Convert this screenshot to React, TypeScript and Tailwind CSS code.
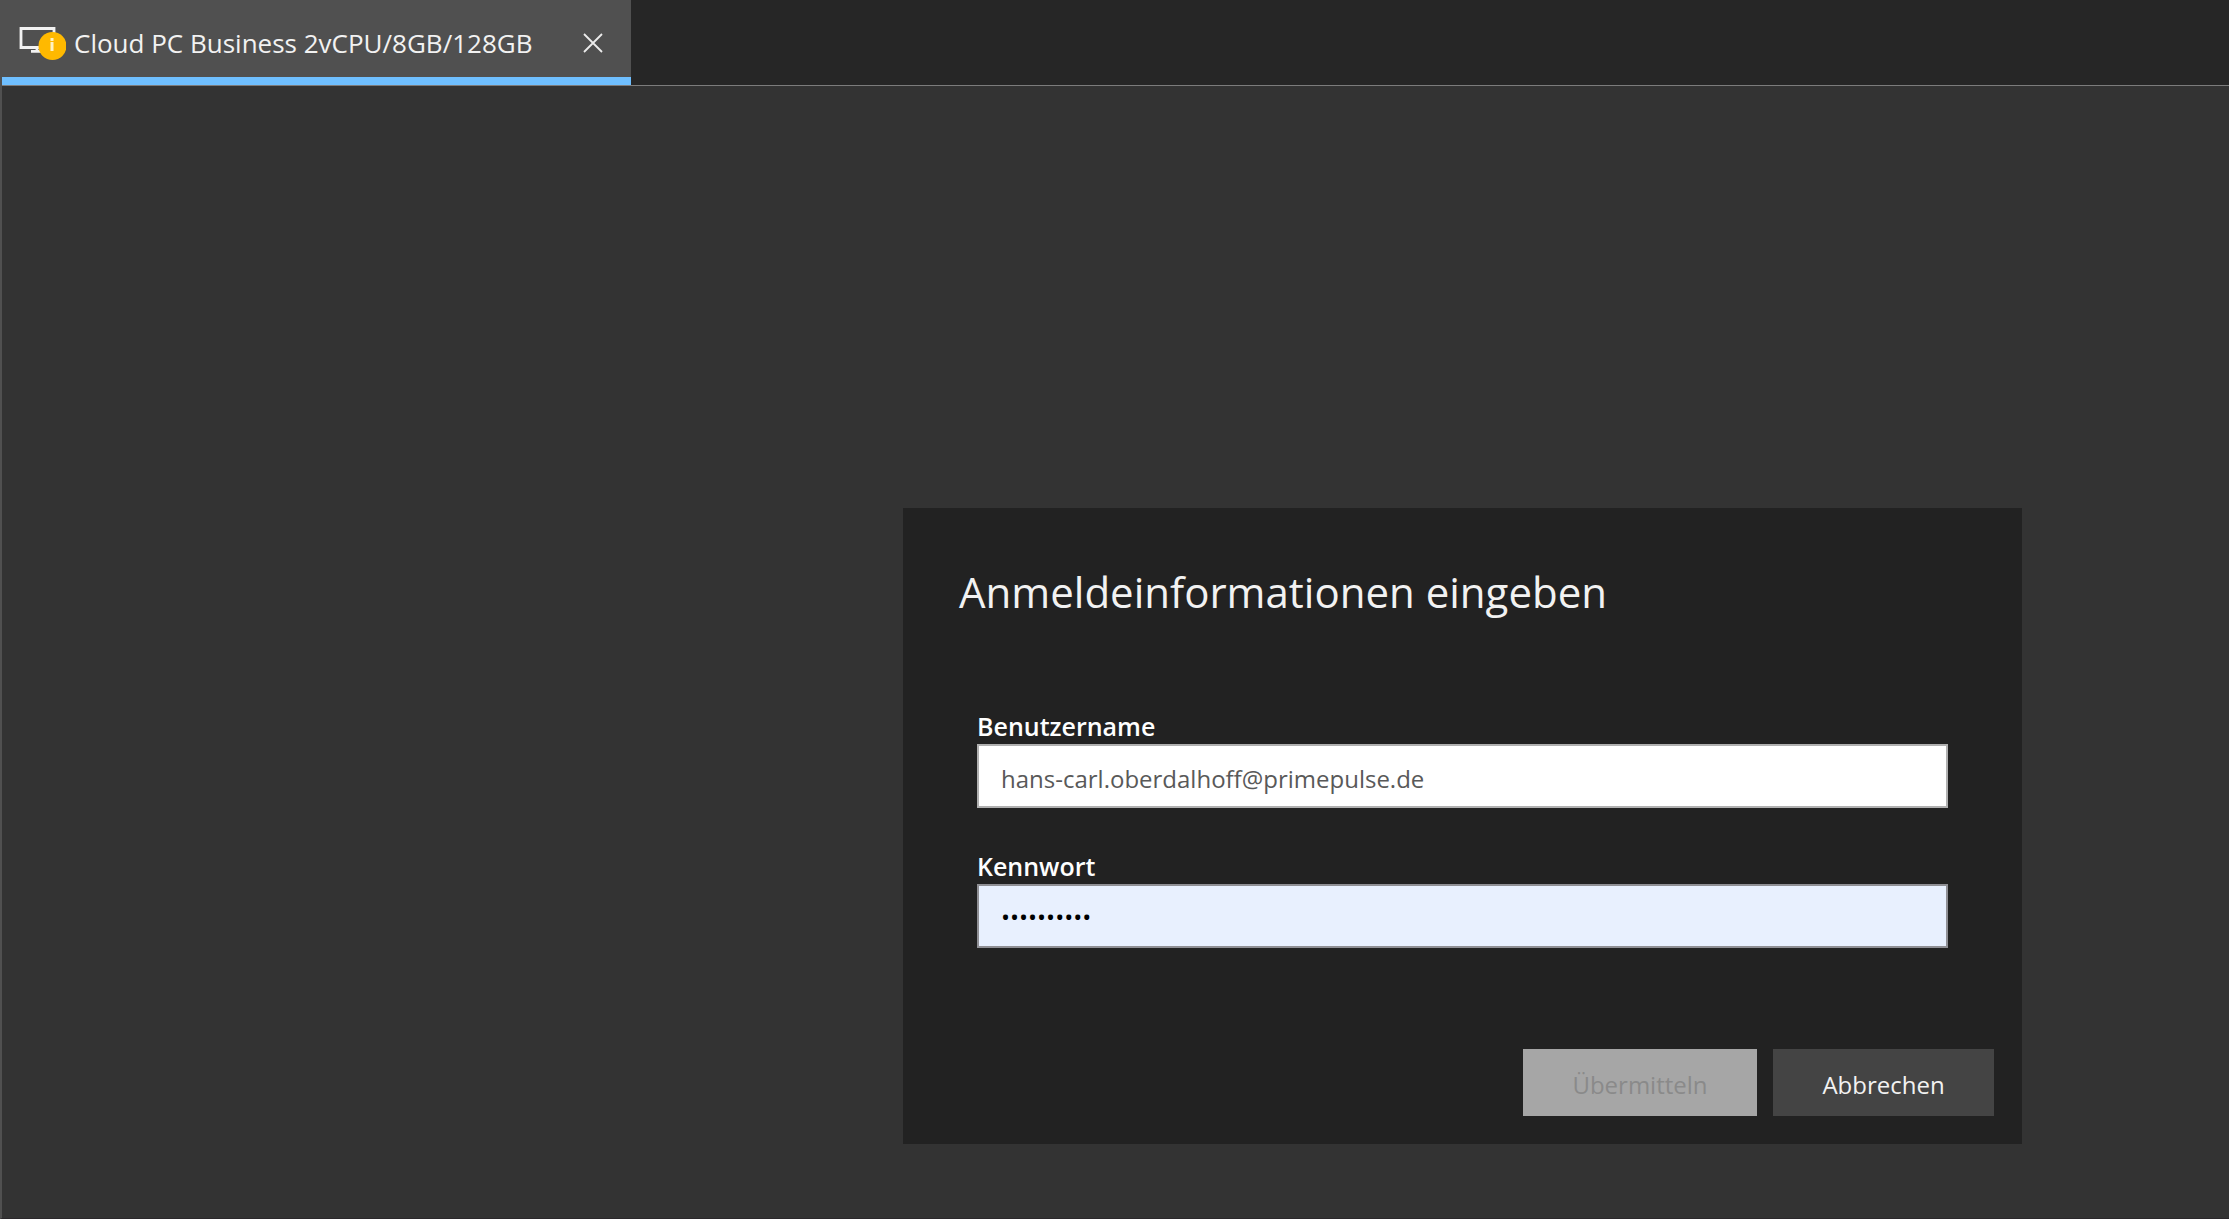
import { useState } from "react";

function DesktopWarningIcon() {
  return (
    <svg className="h-10 w-12 shrink-0" viewBox="0 0 48 40" fill="none" aria-hidden="true">
      <path d="M22 24.5H3V5.5h33v8" stroke="#f2f2f2" strokeWidth="2.8" />
      <path d="M19 24v4M13 28.4h10" stroke="#f2f2f2" strokeWidth="2.8" />
      <circle cx="34.5" cy="23" r="14" fill="#ffb900" />
      <rect x="32.5" y="15" width="3" height="3" fill="#fff3c4" />
      <rect x="32.5" y="19" width="3" height="9" fill="#fff3c4" />
    </svg>
  );
}

function CloseIcon() {
  return (
    <svg className="size-5" viewBox="0 0 20 20" fill="none" aria-hidden="true">
      <path d="M1 1l18 18M19 1L1 19" stroke="#ececec" strokeWidth="1.8" />
    </svg>
  );
}

function TabBar() {
  return (
    <header className="flex h-[86px] border-b border-[#7c7c7c] bg-[#262626]">
      <div className="flex border-b-8 border-[#6fbfff] bg-[#505050] pr-6 pl-4">
        <div className="flex items-center gap-2 pt-2">
          <DesktopWarningIcon />
          <span className="text-[26px] leading-9 whitespace-nowrap text-[#f2f2f2]">
            Cloud PC Business 2vCPU/8GB/128GB
          </span>
          <button type="button" aria-label="Schließen" className="ml-[38px] p-1">
            <CloseIcon />
          </button>
        </div>
      </div>
    </header>
  );
}

function LoginDialog() {
  const [user, setUser] = useState("hans-carl.oberdalhoff@primepulse.de");
  const [password, setPassword] = useState("abcdefghij");

  return (
    <form
      role="dialog"
      aria-labelledby="dialog-title"
      className="col-start-2 bg-[#222222] pt-14 pr-7 pb-7 pl-14"
      onSubmit={(e) => e.preventDefault()}
    >
      <h1 id="dialog-title" className="text-[42px] leading-14 text-[#f2f2f2]">
        Anmeldeinformationen eingeben
      </h1>
      <div className="mt-[88px] mr-[46px] ml-[18px] flex flex-col">
        <label htmlFor="user" className="text-[25px] leading-9 font-semibold text-white">
          Benutzername
        </label>
        <input
          id="user"
          type="text"
          value={user}
          onChange={(e) => setUser(e.target.value)}
          className="h-16 w-full border-2 border-[#b0b0b0] bg-white px-[22px] pt-1 text-[24px] text-[#595959] outline-none"
        />
        <label htmlFor="password" className="mt-10 text-[25px] leading-9 font-semibold text-white">
          Kennwort
        </label>
        <input
          id="password"
          type="password"
          value={password}
          onChange={(e) => setPassword(e.target.value)}
          className="h-16 w-full border-2 border-[#8f8f94] bg-[#e8f0fe] px-[22px] text-[24px] text-black outline-none"
        />
      </div>
      <div className="mt-[101px] flex justify-end gap-4">
        <button
          type="submit"
          disabled
          className="h-[67px] w-[234px] bg-[#a6a6a6] pt-1 text-[24px] text-[#8a8a8a]"
        >
          Übermitteln
        </button>
        <button type="button" className="h-[67px] w-[221px] bg-[#444444] pt-1 text-[24px] text-[#f2f2f2]">
          Abbrechen
        </button>
      </div>
    </form>
  );
}

export default function App() {
  return (
    <div className="flex min-h-screen flex-col border-b border-l-2 border-b-[#2b282b] border-l-[#505050] bg-[#333333] font-['Open_Sans','Noto_Sans',sans-serif]">
      <TabBar />
      <main className="grid grow grid-cols-[901fr_1119fr_207fr] items-start pt-[422px]">
        <LoginDialog />
      </main>
    </div>
  );
}
